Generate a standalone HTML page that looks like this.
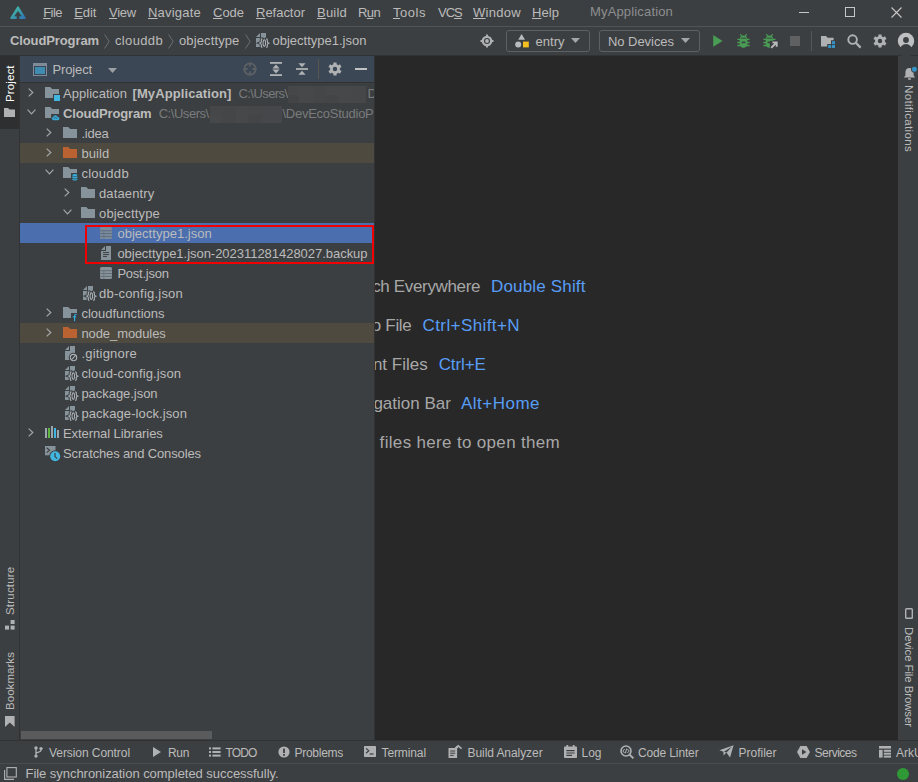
<!DOCTYPE html>
<html lang="en"><head><meta charset="utf-8"><title>DevEco Studio - MyApplication</title>
<style>
*{box-sizing:border-box;margin:0;padding:0}
html,body{width:918px;height:782px;overflow:hidden;background:#3c3f41}
body{position:relative;font-family:"Liberation Sans", sans-serif;font-size:13px;color:#bbbbbb;line-height:1}
.abs{position:absolute}
svg{position:absolute;overflow:visible}
.t{position:absolute;white-space:nowrap;line-height:16px;height:16px}
#menusep{position:absolute;left:0;top:26px;width:918px;height:1px;background:#515455}
#navsep{position:absolute;left:0;top:55px;width:918px;height:1px;background:#323232}
#leftsep{position:absolute;left:19px;top:56px;width:1px;height:684px;background:#323232}
#projtab{position:absolute;left:0;top:56px;width:19px;height:73px;background:#2d2f30}
#panel{position:absolute;left:20px;top:56px;width:354px;height:684px;background:#3c3f41;overflow:hidden}
#phead{position:absolute;left:0;top:0;width:355px;height:26px;background:#3b4754}
#pheadsep{position:absolute;left:0;top:26px;width:355px;height:1px;background:#323232}
#editor{position:absolute;left:375px;top:56px;width:523px;height:684px;background:#282828;overflow:hidden}
#panelsep{position:absolute;left:374px;top:56px;width:1px;height:684px;background:#303233}
#rightsep{position:absolute;left:898px;top:56px;width:1px;height:684px;background:#323232}
#bottomsep{position:absolute;left:0;top:740px;width:918px;height:1px;background:#323232}
#statussep{position:absolute;left:0;top:763px;width:918px;height:1px;background:#4a4c4e}
.row{position:absolute;left:0;width:355px;height:20px}
.sel{background:#4b6eaf}
.exc{background:#4e4a3f}
u{text-decoration:underline;text-underline-offset:1px;text-decoration-thickness:1px}
.hint{position:absolute;white-space:nowrap;font-size:17px;line-height:22px;height:22px;color:#a7a7a7}
.blue{color:#589df6}
.vt{position:absolute;white-space:nowrap;font-size:12px;line-height:12px;height:12px;transform-origin:0 0}
</style></head>
<body>
<svg width="0" height="0" style="left:-10px;top:-10px"><defs>
<linearGradient id="lg" x1="0" y1="0" x2="1" y2="1"><stop offset="0" stop-color="#46c39f"/><stop offset="1" stop-color="#2d74b6"/></linearGradient>
<symbol id="folder" viewBox="0 0 14 11"><path d="M0 0H5.2L7.2 2H14V11H0Z"/></symbol>
<symbol id="chevr" viewBox="0 0 6 9"><path d="M0.7 0.6L4.8 4.5L0.7 8.4" fill="none" stroke="#a3a6a9" stroke-width="1.2"/></symbol>
<symbol id="chevd" viewBox="0 0 9 6"><path d="M0.6 0.7L4.5 4.8L8.4 0.7" fill="none" stroke="#a3a6a9" stroke-width="1.2"/></symbol>
<symbol id="jsonf" viewBox="0 0 14 16">
 <path d="M5 0H10V14H0V5H5Z" fill="#87939a"/><path d="M0 4L4 0V4Z" fill="#87939a"/>
 <g fill="none" stroke="#3c3f41" stroke-width="3.2" stroke-linecap="round"><path d="M6.4 5.8C5.1 5.8 5.3 7.2 5.3 8.4C5.3 9.5 4.5 9.9 4 10.1C4.5 10.3 5.3 10.7 5.3 11.8C5.3 13 5.1 14.4 6.4 14.4"/><path d="M10.2 5.8C11.5 5.8 11.3 7.2 11.3 8.4C11.3 9.5 12.1 9.9 12.6 10.1C12.1 10.3 11.3 10.7 11.3 11.8C11.3 13 11.5 14.4 10.2 14.4"/><ellipse cx="8.3" cy="10.1" rx="1.25" ry="3.3" fill="#3c3f41"/></g>
 <g fill="none" stroke="#aab2b8" stroke-width="1.15"><path d="M6.4 5.8C5.1 5.8 5.3 7.2 5.3 8.4C5.3 9.5 4.5 9.9 4 10.1C4.5 10.3 5.3 10.7 5.3 11.8C5.3 13 5.1 14.4 6.4 14.4"/><path d="M10.2 5.8C11.5 5.8 11.3 7.2 11.3 8.4C11.3 9.5 12.1 9.9 12.6 10.1C12.1 10.3 11.3 10.7 11.3 11.8C11.3 13 11.5 14.4 10.2 14.4"/><ellipse cx="8.3" cy="10.1" rx="1.25" ry="3.3" stroke-width="1.05"/></g>
</symbol>
<symbol id="table" viewBox="0 0 12 12">
 <rect x="0" y="0" width="12" height="12" rx="1.6" fill="#87939a"/>
 <rect x="0" y="3.3" width="12" height="0.9" fill="#616a70"/><rect x="0" y="6.1" width="12" height="0.9" fill="#616a70"/><rect x="0" y="8.9" width="12" height="0.9" fill="#616a70"/>
 <rect x="3.4" y="3.3" width="0.9" height="8.7" fill="#6b757b"/>
</symbol>
</defs></svg>
<svg style="left:10px;top:5.5px" width="16" height="14" viewBox="0 0 16 14">
<path d="M8 1.5L14.6 12H1.4Z" fill="url(#lg)" stroke="url(#lg)" stroke-width="2.2" stroke-linejoin="round"/>
<path d="M8 5L11.7 10.2H9.3V13.6H6.7V10.2H4.3Z" fill="#3c3f41"/></svg>
<span class="t" style="left:43.2px;top:5px;letter-spacing:-0.54px;"><u>F</u>ile</span>
<span class="t" style="left:74.2px;top:5px;letter-spacing:-0.08px;"><u>E</u>dit</span>
<span class="t" style="left:109px;top:5px;letter-spacing:-0.24px;"><u>V</u>iew</span>
<span class="t" style="left:148px;top:5px;letter-spacing:0.21px;"><u>N</u>avigate</span>
<span class="t" style="left:213px;top:5px;letter-spacing:-0.02px;"><u>C</u>ode</span>
<span class="t" style="left:256px;top:5px;letter-spacing:-0.02px;"><u>R</u>efactor</span>
<span class="t" style="left:317px;top:5px;letter-spacing:0.22px;"><u>B</u>uild</span>
<span class="t" style="left:358px;top:5px;letter-spacing:-0.62px;">R<u>u</u>n</span>
<span class="t" style="left:393px;top:5px;letter-spacing:0.53px;"><u>T</u>ools</span>
<span class="t" style="left:438px;top:5px;letter-spacing:-1.00px;">VC<u>S</u></span>
<span class="t" style="left:473px;top:5px;letter-spacing:0.29px;"><u>W</u>indow</span>
<span class="t" style="left:532px;top:5px;letter-spacing:0.06px;"><u>H</u>elp</span>
<span class="t" style="left:590px;top:4px;color:#8c8e90;letter-spacing:0.16px;">MyApplication</span>
<div class="abs" style="left:799px;top:12px;width:10px;height:1px;background:#c6c6c6"></div>
<div class="abs" style="left:845px;top:7px;width:10px;height:10px;border:1px solid #c6c6c6"></div>
<svg style="left:891px;top:7px" width="11" height="11" viewBox="0 0 11 11"><path d="M0.5 0.5L10.5 10.5M10.5 0.5L0.5 10.5" stroke="#c6c6c6" stroke-width="1.1" fill="none"/></svg>
<div id="menusep"></div>
<span class="t" style="left:10px;top:33px;font-weight:bold;letter-spacing:-0.11px;">CloudProgram</span>
<span class="t" style="left:115px;top:33px;letter-spacing:0.35px;">clouddb</span>
<span class="t" style="left:179px;top:33px;letter-spacing:0.12px;">objecttype</span>
<span class="t" style="left:272.5px;top:33px;">objecttype1.json</span>
<svg style="left:103.5px;top:34px" width="6" height="15" viewBox="0 0 6 15"><path d="M0.5 0.5L5.2 7.5L0.5 14.5" fill="none" stroke="#6c6f71" stroke-width="1"/></svg>
<svg style="left:167.5px;top:34px" width="6" height="15" viewBox="0 0 6 15"><path d="M0.5 0.5L5.2 7.5L0.5 14.5" fill="none" stroke="#6c6f71" stroke-width="1"/></svg>
<svg style="left:244.5px;top:34px" width="6" height="15" viewBox="0 0 6 15"><path d="M0.5 0.5L5.2 7.5L0.5 14.5" fill="none" stroke="#6c6f71" stroke-width="1"/></svg>
<svg style="left:255.5px;top:33px" width="14" height="16"><use href="#jsonf"/></svg>
<div id="navsep"></div>
<div id="editor">
<span class="hint" style="right:417.9px;top:220px;letter-spacing:-0.35px">Search Everywhere</span>
<span class="hint blue" style="left:116px;top:220px;font-size:17px;letter-spacing:0.17px;">Double Shift</span>
<span class="hint" style="right:486.5px;top:259px;letter-spacing:-0.3px">Go to File</span>
<span class="hint blue" style="left:47.5px;top:259px;font-size:17px;letter-spacing:0.41px;">Ctrl+Shift+N</span>
<span class="hint" style="right:470.3px;top:298px;letter-spacing:0px">Recent Files</span>
<span class="hint blue" style="left:63.69999999999999px;top:298px;font-size:17px;letter-spacing:-0.12px;">Ctrl+E</span>
<span class="hint" style="right:447.1px;top:337px;letter-spacing:0px">Navigation Bar</span>
<span class="hint blue" style="left:86px;top:337px;font-size:17px;letter-spacing:0.48px;">Alt+Home</span>
<span class="hint" style="right:337.9px;top:376px;letter-spacing:0.33px">Drop files here to open them</span>
</div>
<div id="projtab"></div><div id="leftsep"></div><div id="panelsep"></div>
<div id="panel"><div id="phead"></div><div id="pheadsep"></div>
<svg style="left:13px;top:7px" width="14" height="13" viewBox="0 0 14 13"><rect x="0" y="0" width="14" height="13" fill="#7f8b96"/><rect x="1" y="3" width="12" height="9" fill="#3b4754"/><rect x="2" y="4" width="10" height="7" fill="#3e8cb0"/></svg>
<span class="t" style="left:32.5px;top:6px;letter-spacing:-0.14px;">Project</span>
<svg style="left:88px;top:12px" width="9" height="5" viewBox="0 0 9 5"><path d="M0 0H9L4.5 5Z" fill="#9da0a3"/></svg>
<svg style="left:223px;top:5.5px" width="14" height="14" viewBox="0 0 14 14"><circle cx="7" cy="7" r="5.7" fill="none" stroke="#5c6064" stroke-width="1.8"/><path d="M7 0.4V4.6M7 9.4V13.6M0.4 7H4.6M9.4 7H13.6" stroke="#5c6064" stroke-width="1.8"/></svg>
<svg style="left:250px;top:6px" width="12" height="14" viewBox="0 0 12 14" fill="#afb1b3"><rect x="0" y="0" width="12" height="1.8"/><rect x="0" y="12.2" width="12" height="1.8"/><path d="M6 2.6L9.6 6.4H2.4Z"/><path d="M6 11.4L9.6 7.6H2.4Z"/></svg>
<svg style="left:276px;top:7px" width="12" height="12" viewBox="0 0 12 12" fill="#afb1b3"><rect x="0" y="5.1" width="12" height="1.8"/><path d="M6 4.2L9.6 0.3H2.4Z"/><path d="M6 7.8L9.6 11.7H2.4Z"/></svg>
<div class="abs" style="left:298px;top:3px;width:1px;height:20px;background:#595650"></div>
<svg style="left:308px;top:6px" width="14" height="14" viewBox="0 0 14 14"><path d="M5.36 2.28L5.45 0.38L8.55 0.38L8.64 2.28L10.27 3.22L11.96 2.35L13.51 5.03L11.91 6.06L11.91 7.94L13.51 8.97L11.96 11.65L10.27 10.78L8.64 11.72L8.55 13.62L5.45 13.62L5.36 11.72L3.73 10.78L2.04 11.65L0.49 8.97L2.09 7.94L2.09 6.06L0.49 5.03L2.04 2.35L3.73 3.22ZM4.80 7.00a2.2 2.2 0 1 0 4.4 0a2.2 2.2 0 1 0 -4.4 0Z" fill="#afb1b3" fill-rule="evenodd"/></svg>
<div class="abs" style="left:335px;top:12px;width:12px;height:2px;background:#c0c2c4"></div>
<div class="row exc" style="top:87px"></div>
<div class="row sel" style="top:167px"></div>
<div class="row exc" style="top:267px"></div>
<svg style="left:8.3px;top:31.9px" width="6" height="9"><use href="#chevr"/></svg>
<svg style="left:25px;top:31px" width="14" height="11" fill="#87939a"><use href="#folder"/></svg>
<div class="abs" style="left:33px;top:38px;width:8px;height:8px;background:#3c3f41"></div><div class="abs" style="left:34px;top:39px;width:6px;height:6px;background:#40b6e0"></div>
<span class="t" style="left:43px;top:29.6px;letter-spacing:0.04px;">Application</span>
<span class="t" style="left:112.5px;top:29.6px;font-weight:bold;letter-spacing:0.10px;">[MyApplication]</span>
<span class="t" style="left:218.5px;top:29.6px;color:#797b7d;letter-spacing:-0.57px;">C:\Users\</span>
<span class="t" style="left:347.5px;top:29.6px;color:#797b7d;">D</span>
<div class="abs" style="left:268px;top:30px;width:11px;height:9px;background:#454749"></div>
<div class="abs" style="left:279px;top:30px;width:14px;height:17px;background:#46484a"></div>
<div class="abs" style="left:293px;top:30px;width:12px;height:17px;background:#444648"></div>
<div class="abs" style="left:305px;top:30px;width:14px;height:9px;background:#46484a"></div>
<div class="abs" style="left:305px;top:39px;width:14px;height:8px;background:#434547"></div>
<div class="abs" style="left:319px;top:30px;width:14px;height:17px;background:#46484a"></div>
<div class="abs" style="left:333px;top:30px;width:13px;height:17px;background:#454749"></div>
<div class="abs" style="left:268px;top:39px;width:11px;height:8px;background:#424446"></div>
<svg style="left:7.0px;top:53.4px" width="9" height="6"><use href="#chevd"/></svg>
<svg style="left:25px;top:51px" width="14" height="11" fill="#87939a"><use href="#folder"/></svg>
<svg style="left:30.6px;top:57.6px" width="9.2" height="6.9" viewBox="0 0 11 8.5"><rect x="0" y="0" width="11" height="9" fill="#3c3f41"/><path d="M3 7.6C1.6 7.6 0.8 6.7 0.8 5.7C0.8 4.7 1.6 4 2.5 4C2.7 2.5 3.9 1.6 5.3 1.6C6.7 1.6 7.7 2.5 8 3.7C9.3 3.7 10.2 4.5 10.2 5.6C10.2 6.7 9.4 7.6 8.2 7.6Z" fill="#35a9d8"/><path d="M3.2 5.9L5 4.2L6.2 5.4L7.8 3.9" stroke="#3c3f41" stroke-width="0.9" fill="none"/></svg>
<span class="t" style="left:43px;top:49.6px;font-weight:bold;letter-spacing:-0.15px;">CloudProgram</span>
<span class="t" style="left:138.7px;top:49.6px;color:#797b7d;letter-spacing:-0.46px;">C:\Users\</span>
<span class="t" style="left:262.5px;top:49.6px;color:#797b7d;letter-spacing:-0.26px;">\DevEcoStudioP</span>
<div class="abs" style="left:190px;top:50px;width:12px;height:9px;background:#454749"></div>
<div class="abs" style="left:190px;top:59px;width:12px;height:8px;background:#46484a"></div>
<div class="abs" style="left:202px;top:50px;width:14px;height:17px;background:#444648"></div>
<div class="abs" style="left:216px;top:50px;width:12px;height:17px;background:#46484a"></div>
<div class="abs" style="left:228px;top:50px;width:14px;height:9px;background:#454749"></div>
<div class="abs" style="left:228px;top:59px;width:14px;height:8px;background:#434547"></div>
<div class="abs" style="left:242px;top:50px;width:20px;height:17px;background:#45474a"></div>
<svg style="left:26.299999999999997px;top:71.9px" width="6" height="9"><use href="#chevr"/></svg>
<svg style="left:43px;top:71px" width="14" height="11" fill="#87939a"><use href="#folder"/></svg>
<span class="t" style="left:61.400000000000006px;top:69.6px;letter-spacing:-0.20px;">.idea</span>
<svg style="left:26.299999999999997px;top:91.9px" width="6" height="9"><use href="#chevr"/></svg>
<svg style="left:43px;top:91px" width="14" height="11" fill="#bb6232"><use href="#folder"/></svg>
<span class="t" style="left:61.400000000000006px;top:89.6px;letter-spacing:0.11px;">build</span>
<svg style="left:25.0px;top:113.4px" width="9" height="6"><use href="#chevd"/></svg>
<svg style="left:43px;top:111px" width="14" height="11" fill="#87939a"><use href="#folder"/></svg>
<svg style="left:50.599999999999994px;top:116.6px" width="7.2" height="8" viewBox="0 0 9 10"><rect x="0" y="0" width="9" height="10" fill="#3c3f41"/><ellipse cx="4.8" cy="2.8" rx="3.2" ry="1.6" fill="#35a9d8"/><path d="M1.6 4.2C2.4 5.2 7.2 5.2 8 4.2V6.1C7.2 7.1 2.4 7.1 1.6 6.1Z" fill="#35a9d8"/><path d="M1.6 7.2C2.4 8.2 7.2 8.2 8 7.2V8.4C7.2 9.8 2.4 9.8 1.6 8.4Z" fill="#35a9d8"/></svg>
<span class="t" style="left:61.400000000000006px;top:109.6px;letter-spacing:0.28px;">clouddb</span>
<svg style="left:44.3px;top:131.9px" width="6" height="9"><use href="#chevr"/></svg>
<svg style="left:61px;top:131px" width="14" height="11" fill="#87939a"><use href="#folder"/></svg>
<span class="t" style="left:79px;top:129.6px;letter-spacing:0.13px;">dataentry</span>
<svg style="left:43.0px;top:153.4px" width="9" height="6"><use href="#chevd"/></svg>
<svg style="left:61px;top:151px" width="14" height="11" fill="#87939a"><use href="#folder"/></svg>
<span class="t" style="left:79px;top:149.6px;letter-spacing:0.17px;">objecttype</span>
<svg style="left:80px;top:171px" width="12" height="12" opacity="0.8"><use href="#table"/></svg>
<span class="t" style="left:97.4px;top:169.6px;letter-spacing:0.03px;">objecttype1.json</span>
<svg style="left:81px;top:190px" width="10" height="14" viewBox="0 0 10 14"><path d="M5 0H10V14H0V5H5Z" fill="#87939a"/><path d="M0 4L4 0V4Z" fill="#87939a"/><rect x="0" y="0" width="0" height="0"/><path d="M2 6.6H8M2 8.6H8M2 10.6H6" stroke="#3c3f41" stroke-width="1"/></svg>
<span class="t" style="left:97.4px;top:189.6px;letter-spacing:-0.03px;">objecttype1.json-202311281428027.backup</span>
<svg style="left:80px;top:211px" width="12" height="12"><use href="#table"/></svg>
<span class="t" style="left:97.4px;top:209.6px;letter-spacing:-0.24px;">Post.json</span>
<svg style="left:63px;top:230px" width="14" height="16"><use href="#jsonf"/></svg>
<span class="t" style="left:79px;top:229.6px;letter-spacing:0.22px;">db-config.json</span>
<svg style="left:26.299999999999997px;top:251.89999999999998px" width="6" height="9"><use href="#chevr"/></svg>
<svg style="left:43px;top:251px" width="14" height="11" fill="#87939a"><use href="#folder"/></svg>
<svg style="left:51px;top:257px" width="7" height="9" viewBox="0 0 7 9"><rect x="0" y="0" width="7" height="9" fill="#3c3f41"/><path d="M5.6 1.4C4.2 1 3.6 1.8 3.6 3V8.2M1.8 3.8H5.2" fill="none" stroke="#35a9d8" stroke-width="1.2"/></svg>
<span class="t" style="left:61.400000000000006px;top:249.6px;">cloudfunctions</span>
<svg style="left:26.299999999999997px;top:271.9px" width="6" height="9"><use href="#chevr"/></svg>
<svg style="left:43px;top:271px" width="14" height="11" fill="#bb6232"><use href="#folder"/></svg>
<span class="t" style="left:61.400000000000006px;top:269.6px;letter-spacing:-0.08px;">node_modules</span>
<svg style="left:45px;top:290px" width="14" height="16" viewBox="0 0 14 16"><path d="M5 0H10V14H0V5H5Z" fill="#87939a"/><path d="M0 4L4 0V4Z" fill="#87939a"/><circle cx="8.5" cy="11.6" r="4.8" fill="#3c3f41"/><circle cx="8.5" cy="11.6" r="3.2" fill="none" stroke="#aab2b8" stroke-width="1.1"/><path d="M6.3 13.8L10.7 9.4" stroke="#aab2b8" stroke-width="1.1"/></svg>
<span class="t" style="left:61.400000000000006px;top:289.6px;letter-spacing:0.21px;">.gitignore</span>
<svg style="left:45px;top:310px" width="14" height="16"><use href="#jsonf"/></svg>
<span class="t" style="left:61.400000000000006px;top:309.6px;letter-spacing:0.13px;">cloud-config.json</span>
<svg style="left:45px;top:330px" width="14" height="16"><use href="#jsonf"/></svg>
<span class="t" style="left:61.400000000000006px;top:329.6px;letter-spacing:-0.04px;">package.json</span>
<svg style="left:45px;top:350px" width="14" height="16"><use href="#jsonf"/></svg>
<span class="t" style="left:61.400000000000006px;top:349.6px;letter-spacing:0.09px;">package-lock.json</span>
<svg style="left:8.3px;top:371.9px" width="6" height="9"><use href="#chevr"/></svg>
<div class="abs" style="left:25px;top:372px;width:2px;height:10px;background:#9aa7b0"></div>
<div class="abs" style="left:28px;top:372px;width:2px;height:10px;background:#62b543"></div>
<div class="abs" style="left:31px;top:370px;width:2px;height:12px;background:#9aa7b0"></div>
<div class="abs" style="left:34.2px;top:372px;width:2px;height:10px;background:#40b6e0"></div>
<div class="abs" style="left:37.3px;top:374px;width:2px;height:8px;background:#9aa7b0"></div>
<span class="t" style="left:43px;top:369.6px;letter-spacing:-0.08px;">External Libraries</span>
<svg style="left:25px;top:390px" width="16" height="16" viewBox="0 0 16 16"><rect x="0" y="0" width="10.5" height="9.3" fill="#87939a"/><path d="M1.6 1.8L4.6 4.2L1.6 6.6" fill="none" stroke="#3c3f41" stroke-width="1.1"/><circle cx="10.2" cy="10.2" r="6" fill="#3c3f41"/><circle cx="10.2" cy="10.2" r="5" fill="#40b6e0"/><path d="M10 7V10.6L12.2 12.6" fill="none" stroke="#3c3f41" stroke-width="1.2"/></svg>
<span class="t" style="left:43px;top:389.6px;letter-spacing:-0.14px;">Scratches and Consoles</span>
<div class="abs" style="left:65px;top:169px;width:289px;height:39px;border:2px solid #f00000"></div>
<div class="abs" style="left:1px;top:675px;width:191px;height:8px;background:#595b5d"></div>
</div>
<svg style="left:480px;top:34px" width="14" height="14" viewBox="0 0 14 14"><circle cx="7" cy="7" r="4.2" fill="none" stroke="#afb1b3" stroke-width="2.3"/><circle cx="7" cy="7" r="1.9" fill="#afb1b3"/><path d="M7 0.5V2.4M7 11.6V13.5M0.5 7H2.4M11.6 7H13.5" stroke="#afb1b3" stroke-width="1.9"/></svg>
<div class="abs" style="left:506px;top:30px;width:84px;height:22px;border:1px solid #5e6163;border-radius:3px"></div>
<div class="abs" style="left:599px;top:30px;width:101px;height:22px;border:1px solid #5e6163;border-radius:3px"></div>
<svg style="left:515px;top:34px" width="15" height="14" viewBox="0 0 15 14"><path d="M6.6 0L10 5.8H3.2Z" fill="#b9bbbd"/><circle cx="3.2" cy="10.4" r="3" fill="#b9bbbd"/><rect x="8" y="7.6" width="5.8" height="5.8" fill="#f4c020"/></svg>
<span class="t" style="left:535.5px;top:34px;letter-spacing:0.02px;">entry</span>
<svg style="left:571px;top:38px" width="9" height="5" viewBox="0 0 9 5"><path d="M0 0H9L4.5 5Z" fill="#a4a6a8"/></svg>
<span class="t" style="left:608px;top:34px;letter-spacing:-0.05px;">No Devices</span>
<svg style="left:681px;top:38px" width="9" height="5" viewBox="0 0 9 5"><path d="M0 0H9L4.5 5Z" fill="#a4a6a8"/></svg>
<svg style="left:713px;top:35px" width="10" height="12" viewBox="0 0 10 12"><path d="M0.2 0.1L9.6 5.9L0.2 11.7Z" fill="#499c54"/></svg>
<svg style="left:736.8px;top:34.4px" width="13" height="14" viewBox="0 0 13 14"><path d="M3.3 0.1L5.1 2.5M9.7 0.1L7.9 2.5" stroke="#499c54" stroke-width="1.2" fill="none"/><path d="M6.5 1.5C8.9 1.5 10.3 3 10.3 5.2V9.8C10.3 12.2 8.9 13.7 6.5 13.7C4.1 13.7 2.7 12.2 2.7 9.8V5.2C2.7 3 4.1 1.5 6.5 1.5Z" fill="#499c54"/><path d="M0.4 5.4H12.6M0.4 8.5H12.6M0.4 11.5H12.6" stroke="#499c54" stroke-width="1.4" fill="none"/><path d="M3.6 4.2H9.4" stroke="#3c3f41" stroke-width="0.9"/><path d="M4.6 8.4H8.4" stroke="#3c3f41" stroke-width="1.6"/></svg>
<svg style="left:762.8px;top:34.4px" width="16" height="15" viewBox="0 0 16 15"><path d="M3.3 0.1L5.1 2.5M9.7 0.1L7.9 2.5" stroke="#499c54" stroke-width="1.2" fill="none"/><path d="M6.5 1.5C8.9 1.5 10.3 3 10.3 5.2V9.8C10.3 12.2 8.9 13.7 6.5 13.7C4.1 13.7 2.7 12.2 2.7 9.8V5.2C2.7 3 4.1 1.5 6.5 1.5Z" fill="#499c54"/><path d="M0.4 5.4H12.6M0.4 8.5H12.6M0.4 11.5H12.6" stroke="#499c54" stroke-width="1.4" fill="none"/><path d="M3.6 4.2H9.4" stroke="#3c3f41" stroke-width="0.9"/><path d="M4.6 8.4H8.4" stroke="#3c3f41" stroke-width="1.6"/><rect x="6.8" y="6.8" width="9.2" height="8.2" fill="#3c3f41"/><path d="M8.2 13.8L13 9M9.4 8.4H13.7V12.7" fill="none" stroke="#b9bbbd" stroke-width="1.9"/></svg>
<div class="abs" style="left:790px;top:36px;width:10px;height:10px;background:#5e6062"></div>
<div class="abs" style="left:811px;top:31px;width:1px;height:20px;background:#555759"></div>
<svg style="left:821px;top:35.6px" width="15" height="12" viewBox="0 0 15 12"><path d="M0 0H5L6.6 1.8H12.6V10.4H0Z" fill="#afb1b3"/><path d="M10 4.2H15V12H6.2V8H10Z" fill="#3c3f41"/><rect x="11" y="5.2" width="3" height="3" fill="#3592c4"/><rect x="7.2" y="9" width="3" height="3" fill="#3592c4"/><rect x="11" y="9" width="3" height="3" fill="#3592c4"/></svg>
<svg style="left:847px;top:34px" width="15" height="15" viewBox="0 0 15 15"><circle cx="5.6" cy="5.6" r="4.3" fill="none" stroke="#afb1b3" stroke-width="1.9"/><path d="M8.8 8.8L13.6 13.6" stroke="#afb1b3" stroke-width="2.2"/></svg>
<svg style="left:873px;top:34px" width="14" height="14" viewBox="0 0 14 14"><path d="M5.36 2.28L5.45 0.38L8.55 0.38L8.64 2.28L10.27 3.22L11.96 2.35L13.51 5.03L11.91 6.06L11.91 7.94L13.51 8.97L11.96 11.65L10.27 10.78L8.64 11.72L8.55 13.62L5.45 13.62L5.36 11.72L3.73 10.78L2.04 11.65L0.49 8.97L2.09 7.94L2.09 6.06L0.49 5.03L2.04 2.35L3.73 3.22ZM4.80 7.00a2.2 2.2 0 1 0 4.4 0a2.2 2.2 0 1 0 -4.4 0Z" fill="#afb1b3" fill-rule="evenodd"/></svg>
<svg style="left:898px;top:33px" width="16" height="16" viewBox="0 0 16 16"><circle cx="8" cy="8" r="8.2" fill="#bdbfc1"/><g fill="#3c3f41"><circle cx="8" cy="7" r="2.9"/><ellipse cx="8" cy="17.6" rx="6.4" ry="6.6"/></g></svg>
<span class="vt" style="left:4px;top:101.6px;transform:rotate(-90deg);color:#ffffff;font-size:11.5px;letter-spacing:0.11px;">Project</span>
<svg style="left:4px;top:108px" width="11" height="9" viewBox="0 0 11 9"><path d="M0 0H4L5.6 1.6H11V9H0Z" fill="#afb1b3"/></svg>
<span class="vt" style="left:4px;top:614.5px;transform:rotate(-90deg);color:#bbbbbb;font-size:11.5px;letter-spacing:0.20px;">Structure</span>
<svg style="left:5px;top:620px" width="10" height="10" viewBox="0 0 10 10" fill="#afb1b3"><rect x="5.6" y="0" width="4" height="4"/><rect x="0" y="5.6" width="4" height="4"/><rect x="5.6" y="5.6" width="4" height="4"/></svg>
<span class="vt" style="left:4px;top:710px;transform:rotate(-90deg);color:#bbbbbb;font-size:11.5px;letter-spacing:0.05px;">Bookmarks</span>
<svg style="left:5px;top:716px" width="10" height="11" viewBox="0 0 10 11"><path d="M0 0H9.6V11L4.8 6.6L0 11Z" fill="#afb1b3"/></svg>
<svg style="left:902.6px;top:66.4px" width="15" height="15" viewBox="0 0 15 15"><path d="M6.5 2C9.4 2 10.6 4 10.6 6.6V9.4L12.2 11.4H0.8L2.4 9.4V6.6C2.4 4 3.6 2 6.5 2Z" fill="#afb1b3"/><rect x="5.2" y="12.2" width="2.6" height="1.6" fill="#afb1b3"/><circle cx="11.4" cy="3.2" r="3.4" fill="#3c3f41"/><circle cx="11.4" cy="3.2" r="2.5" fill="#3592c4"/></svg>
<span class="vt" style="left:915px;top:85px;transform:rotate(90deg);color:#bbbbbb;font-size:11.5px;letter-spacing:0.34px;">Notifications</span>
<svg style="left:905px;top:608px" width="8" height="11" viewBox="0 0 8 11"><rect x="0.7" y="0.7" width="6.6" height="9.6" rx="0.8" fill="none" stroke="#afb1b3" stroke-width="1.4"/></svg>
<span class="vt" style="left:915px;top:627px;transform:rotate(90deg);color:#bbbbbb;font-size:11.5px;letter-spacing:-0.12px;">Device File Browser</span>
<svg style="left:34px;top:746px" width="9" height="12" viewBox="0 0 9 12"><circle cx="2" cy="1.9" r="1.7" fill="#afb1b3"/><circle cx="2" cy="10.1" r="1.7" fill="#afb1b3"/><circle cx="7" cy="2.6" r="1.7" fill="#afb1b3"/><path d="M2 2V10M7 3V4.4C7 6.4 2 6 2 8" fill="none" stroke="#afb1b3" stroke-width="1.3"/></svg>
<span class="t" style="left:49px;top:745px;font-size:12px;letter-spacing:-0.07px;">Version Control</span>
<svg style="left:153px;top:747px" width="8" height="10" viewBox="0 0 8 10"><path d="M0 0L8 5L0 10Z" fill="#afb1b3"/></svg>
<span class="t" style="left:168px;top:745px;font-size:12px;letter-spacing:-0.34px;">Run</span>
<svg style="left:209px;top:747px" width="12" height="10" viewBox="0 0 12 10" fill="#afb1b3"><rect x="0" y="0.4" width="2" height="2"/><rect x="0" y="4" width="2" height="2"/><rect x="0" y="7.6" width="2" height="2"/><rect x="3.4" y="0.4" width="8.2" height="2"/><rect x="3.4" y="4" width="8.2" height="2"/><rect x="3.4" y="7.6" width="8.2" height="2"/></svg>
<span class="t" style="left:225.5px;top:745px;font-size:12px;letter-spacing:-0.86px;">TODO</span>
<svg style="left:278px;top:746px" width="12" height="12" viewBox="0 0 12 12"><circle cx="6" cy="6" r="5.6" fill="#afb1b3"/><rect x="5.1" y="2.6" width="1.8" height="4.4" fill="#3c3f41"/><rect x="5.1" y="8" width="1.8" height="1.8" fill="#3c3f41"/></svg>
<span class="t" style="left:294.5px;top:745px;font-size:12px;letter-spacing:-0.27px;">Problems</span>
<svg style="left:364px;top:746px" width="12" height="11" viewBox="0 0 12 11"><rect x="0" y="0" width="12" height="11" rx="0.8" fill="#afb1b3"/><path d="M2 2.4L4.8 4.8L2 7.2" fill="none" stroke="#3c3f41" stroke-width="1.2"/><rect x="5.6" y="7.4" width="4" height="1.2" fill="#3c3f41"/></svg>
<span class="t" style="left:381.5px;top:745px;font-size:12px;letter-spacing:-0.11px;">Terminal</span>
<svg style="left:448px;top:745px" width="14" height="13" viewBox="0 0 14 13"><rect x="0.5" y="3" width="8.6" height="10" fill="#afb1b3"/><path d="M2.2 6H7.2M2.2 8.2H7.2M2.2 10.4H5.6" stroke="#3c3f41" stroke-width="1"/><path d="M6.4 4.4L10.2 0.8L13.6 3.6" fill="none" stroke="#afb1b3" stroke-width="1.5"/><path d="M9.8 1.2L7 4.2" stroke="#afb1b3" stroke-width="2"/></svg>
<span class="t" style="left:467.5px;top:745px;font-size:12px;letter-spacing:-0.07px;">Build Analyzer</span>
<svg style="left:564px;top:745px" width="13" height="13" viewBox="0 0 13 13"><rect x="0" y="1.6" width="13" height="11.4" rx="0.8" fill="#afb1b3"/><rect x="2.4" y="0" width="1.8" height="3" fill="#afb1b3"/><rect x="8.8" y="0" width="1.8" height="3" fill="#afb1b3"/><path d="M2.4 5.6H10.6M2.4 8H10.6M2.4 10.4H8" stroke="#3c3f41" stroke-width="1.1"/></svg>
<span class="t" style="left:581.5px;top:745px;font-size:12px;letter-spacing:-0.01px;">Log</span>
<svg style="left:620px;top:745px" width="14" height="14" viewBox="0 0 14 14"><circle cx="6" cy="6" r="5" fill="none" stroke="#afb1b3" stroke-width="1.6"/><path d="M9.6 9.6L13.4 13.4" stroke="#afb1b3" stroke-width="2"/><path d="M4.6 4L2.8 6L4.6 8M7.4 4L9.2 6L7.4 8M6.6 3.6L5.4 8.4" fill="none" stroke="#afb1b3" stroke-width="1"/></svg>
<span class="t" style="left:638px;top:745px;font-size:12px;letter-spacing:-0.14px;">Code Linter</span>
<svg style="left:719px;top:745px" width="15" height="13" viewBox="0 0 15 13"><path d="M0.4 5.2L14.6 0.2L11 12.6L7.4 7.6L4.6 10.6L4.4 6.8Z" fill="#afb1b3"/><path d="M5 6.8L13 1.6L7.6 7.4" fill="#3c3f41"/></svg>
<span class="t" style="left:738.5px;top:745px;font-size:12px;">Profiler</span>
<svg style="left:797px;top:746px" width="13" height="12" viewBox="0 0 13 12"><path d="M3.4 0H9.6L13 6L9.6 12H3.4L0 6Z" fill="#afb1b3"/><path d="M5 3.2L9.4 6L5 8.8Z" fill="#3c3f41"/></svg>
<span class="t" style="left:814.5px;top:745px;font-size:12px;letter-spacing:-0.50px;">Services</span>
<svg style="left:879px;top:746px" width="12" height="12" viewBox="0 0 12 12" fill="#afb1b3"><rect x="0" y="0" width="12" height="2.6"/><rect x="0" y="3.8" width="3.6" height="7.8"/><rect x="4.8" y="3.8" width="7.2" height="2"/><rect x="4.8" y="6.7" width="7.2" height="2"/><rect x="4.8" y="9.6" width="7.2" height="2"/></svg>
<span class="t" style="left:896px;top:745px;font-size:12px;">ArkUI Inspector</span>
<svg style="left:4px;top:767px" width="13" height="13" viewBox="0 0 13 13"><rect x="2.9" y="0.6" width="9.4" height="9.4" fill="none" stroke="#afb1b3" stroke-width="1.1"/><path d="M0.6 3V12.4H10" fill="none" stroke="#afb1b3" stroke-width="1.1"/></svg>
<div class="abs" style="left:897px;top:768px;width:12px;height:12px;border-radius:50%;background:#2f9a35"></div>
<div id="bottomsep"></div><div id="statussep"></div>
<span class="t" style="left:25.5px;top:766px;letter-spacing:-0.04px;">File synchronization completed successfully.</span>
</body></html>
